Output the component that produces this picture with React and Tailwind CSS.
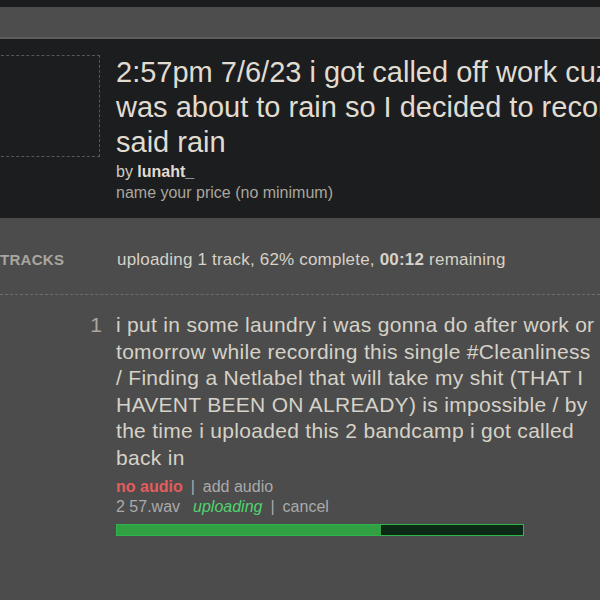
export default function App() {
  const progress = 65;
  return (
    <div className="w-[600px] h-[600px] overflow-hidden bg-[#4c4c4c] font-['Liberation_Sans',Arial,sans-serif] text-[#d6d2c7]">
      <div className="h-[7px] bg-[#1b1c1e]" />
      <div className="h-[30px] bg-[#4d4d4d]" />
      <div className="h-[2px] bg-[#5c5c5c]" />
      <div className="h-[179px] bg-[#1c1d1f] flex pt-[16px] overflow-hidden">
        <div className="ml-[-100px] w-[200px] h-[102px] border border-dashed border-[#56575a] shrink-0" />
        <div className="ml-[16px] flex flex-col whitespace-nowrap">
          <div className="text-[29px] leading-[35px] text-[#e0dcd1]">
            <div>2:57pm 7/6/23 i got called off work cuz it</div>
            <div>was about to rain so I decided to record</div>
            <div>said rain</div>
          </div>
          <div className="text-[16px] leading-[20px] mt-[2px] text-[#d0ccc1]">
            by <span className="font-bold text-[#e0dcd1]">lunaht_</span>
          </div>
          <div className="text-[16px] leading-[22px] text-[#aaa69d]">name your price (no minimum)</div>
        </div>
      </div>
      <div className="flex items-center h-[77px] pt-[8px] border-b border-dashed border-[#6c6c6c] whitespace-nowrap">
        <div className="w-[63px] shrink-0 text-right text-[15px] font-bold tracking-[0.3px] text-[#aaa69e]">TRACKS</div>
        <div className="ml-[54px] text-[17px] tracking-[0.2px] text-[#d6d2c7]">
          uploading 1 track, 62% complete, <span className="font-bold">00:12</span> remaining
        </div>
      </div>
      <div className="flex pt-[17px] whitespace-nowrap">
        <div className="w-[102px] shrink-0 text-right text-[21px] leading-[26.6px] text-[#aaa69e]">1</div>
        <div className="ml-[14px] flex flex-col">
          <div className="text-[21px] leading-[26.6px] tracking-[0.3px] text-[#d6d2c7]">
            <div>i put in some laundry i was gonna do after work or</div>
            <div>tomorrow while recording this single #Cleanliness</div>
            <div>/ Finding a Netlabel that will take my shit (THAT I</div>
            <div>HAVENT BEEN ON ALREADY) is impossible / by</div>
            <div>the time i uploaded this 2 bandcamp i got called</div>
            <div>back in</div>
          </div>
          <div className="mt-[5px] text-[16px] leading-[20px] text-[#aaaaaa]">
            <span className="font-bold text-[#e45c5c]">no audio</span>
            <span className="mx-[8px]">|</span>
            <span>add audio</span>
          </div>
          <div className="text-[16px] leading-[20px] text-[#aaaaaa]">
            <span>2 57.wav</span>
            <span className="ml-[13px] italic text-[#4fd46f]">uploading</span>
            <span className="mx-[8px]">|</span>
            <span>cancel</span>
          </div>
          <div className="mt-[7px] w-[408px] h-[12px] border border-[#2fb54d] bg-[#0b2914] flex">
            <div className="h-full bg-[#30a043]" style={{ width: `${progress}%` }} />
          </div>
        </div>
      </div>
    </div>
  );
}
